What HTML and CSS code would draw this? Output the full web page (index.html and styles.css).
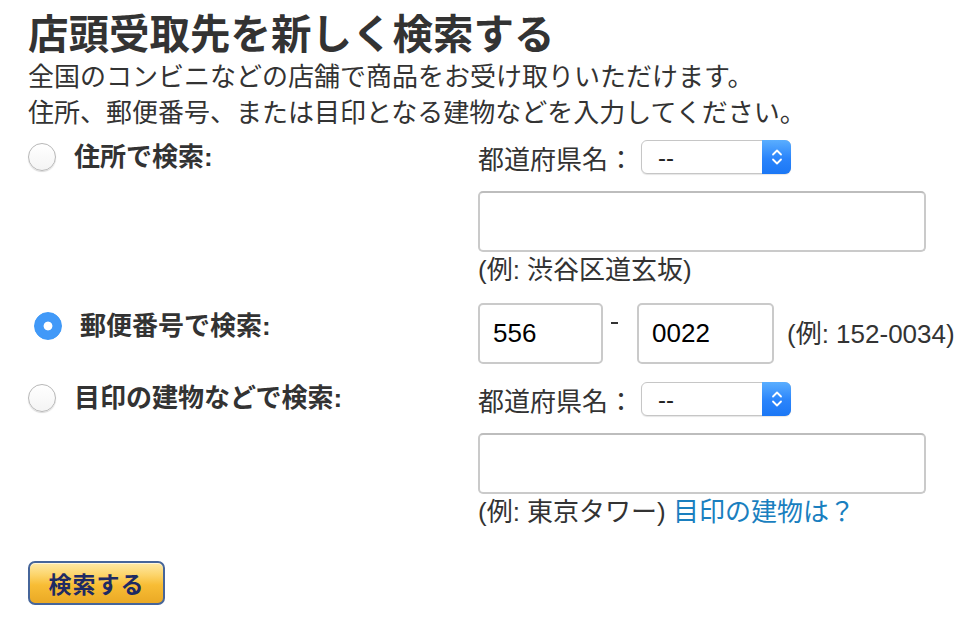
FILE: index.html
```html
<!DOCTYPE html>
<html lang="ja">
<head>
  <meta charset="UTF-8">
  <title>店頭受取先を新しく検索する</title>
  <link rel="stylesheet" href="styles.css">
</head>
<body>
  <div class="pagina">
    <h1>店頭受取先を新しく検索する</h1>
    <p class="intro">全国のコンビニなどの店舗で商品をお受け取りいただけます。<br>住所、郵便番号、または目印となる建物などを入力してください。</p>

    <form class="buscador">
      <div class="fila fila-direccion">
        <label class="opcion">
          <span class="radio"></span>
          <span>住所で検索:</span>
        </label>
        <div class="campos">
          <div class="linea">
            <span>都道府県名：</span>
            <div class="selector">
              <select><option>--</option></select>
              <span class="flechas">
                <svg width="12" height="20" viewBox="0 0 12 20"><path d="M2 7.5 6 3.5 10 7.5M2 12.5 6 16.5 10 12.5" fill="none" stroke="#fff" stroke-width="1.8" stroke-linecap="round" stroke-linejoin="round"/></svg>
              </span>
            </div>
          </div>
          <input type="text" class="texto">
          <div class="ejemplo">(例: 渋谷区道玄坂)</div>
        </div>
      </div>

      <div class="fila fila-postal">
        <label class="opcion">
          <span class="radio marcado"></span>
          <span>郵便番号で検索:</span>
        </label>
        <div class="campos">
          <div class="linea linea-postal">
            <input type="text" class="postal postal-1" value="556">
            <span class="guion"></span>
            <input type="text" class="postal postal-2" value="0022">
            <span class="ejemplo">(例: 152-0034)</span>
          </div>
        </div>
      </div>

      <div class="fila fila-edificio">
        <label class="opcion">
          <span class="radio"></span>
          <span>目印の建物などで検索:</span>
        </label>
        <div class="campos">
          <div class="linea">
            <span>都道府県名：</span>
            <div class="selector">
              <select><option>--</option></select>
              <span class="flechas">
                <svg width="12" height="20" viewBox="0 0 12 20"><path d="M2 7.5 6 3.5 10 7.5M2 12.5 6 16.5 10 12.5" fill="none" stroke="#fff" stroke-width="1.8" stroke-linecap="round" stroke-linejoin="round"/></svg>
              </span>
            </div>
          </div>
          <input type="text" class="texto">
          <div class="ejemplo">(例: 東京タワー) <a href="#">目印の建物は？</a></div>
        </div>
      </div>

      <button type="button" class="boton">検索する</button>
    </form>
  </div>
</body>
</html>
```

FILE: styles.css
```css
body {
  margin: 0;
  background: #fff;
  color: #333;
  font-family: "Liberation Sans", "Noto Sans CJK JP", sans-serif;
  font-size: 26px;
}
.pagina {
  padding: 11px 0 0 28px;
}
h1 {
  margin: 0;
  font-size: 40.5px;
  line-height: 48px;
  font-weight: bold;
}
.intro {
  margin: 0;
  line-height: 36px;
}
.buscador {
  margin-top: 9px;
}
.fila {
  display: grid;
  grid-template-columns: 450px 1fr;
  align-items: start;
}
.fila-postal {
  margin-top: 15px;
}
.fila-edificio {
  margin-top: 18px;
}
.opcion {
  display: flex;
  align-items: center;
  gap: 18px;
  font-weight: bold;
  line-height: 30px;
}
.fila-direccion .opcion {
  padding-top: 2px;
}
.fila-postal .opcion {
  padding-top: 8px;
  margin-left: 6px;
}
.fila-edificio .opcion {
  padding-top: 1px;
}
.radio {
  width: 26px;
  height: 26px;
  border: 1px solid #b8b8b8;
  border-radius: 50%;
  background: linear-gradient(#fff, #f4f4f4);
  box-shadow: 0 1px 1px rgba(0, 0, 0, 0.15);
  flex: none;
}
.radio.marcado {
  border-color: #3d98f7;
  background: radial-gradient(circle, #fff 0 4px, #4199f8 4.8px);
  box-shadow: none;
}
.campos {
  display: flex;
  flex-direction: column;
}
.linea {
  display: flex;
  align-items: center;
  gap: 7px;
  height: 34px;
}
.selector {
  position: relative;
  width: 150px;
  height: 34px;
}
.selector select {
  appearance: none;
  -webkit-appearance: none;
  width: 150px;
  height: 34px;
  margin: 0;
  padding: 0 0 0 16px;
  border: 1px solid #c6c6c6;
  border-radius: 6px;
  background: #fff;
  box-shadow: 0 1px 1px rgba(0, 0, 0, 0.1);
  font-family: "Liberation Sans", sans-serif;
  font-size: 24px;
  color: #222;
}
.flechas {
  position: absolute;
  top: 0;
  right: 0;
  width: 29px;
  height: 34px;
  border-radius: 0 6px 6px 0;
  background: linear-gradient(#5aaeff, #2a84fb 55%, #1b77f5);
  display: flex;
  align-items: center;
  justify-content: center;
}
input.texto {
  width: 448px;
  height: 61px;
  box-sizing: border-box;
  margin: 17px 0 0;
  border: 2px solid #cacaca;
  border-top-color: #bdbdbd;
  border-radius: 5px;
  font-size: 26px;
}
.ejemplo {
  line-height: 36px;
}
.ejemplo a {
  color: #1a7fbf;
  text-decoration: none;
}
.linea-postal {
  height: 61px;
  gap: 0;
}
input.postal {
  height: 61px;
  box-sizing: border-box;
  margin: 0;
  padding: 0 0 0 13px;
  border: 2px solid #cacaca;
  border-radius: 5px;
  font-family: "Liberation Sans", sans-serif;
  font-size: 26px;
  color: #000;
}
.postal-1 {
  width: 125px;
  margin-left: -1px;
}
.postal-2 {
  width: 137px;
  padding-left: 12px;
}
.guion {
  align-self: flex-start;
  width: 7px;
  height: 2px;
  margin: 19px 19px 0 8px;
  background: #333;
}
.linea-postal .ejemplo {
  margin-left: 13px;
}
.boton {
  display: block;
  margin-top: 31px;
  width: 137px;
  height: 44px;
  padding: 0;
  border: 2px solid #46659a;
  border-radius: 7px;
  background: linear-gradient(#fee9a6, #fcd46a 30%, #f8bd35 55%, #eaa925);
  box-shadow: inset 0 1px 0 rgba(255, 255, 255, 0.6);
  color: #1e2a63;
  font-family: "Noto Sans CJK JP", sans-serif;
  font-size: 23px;
  font-weight: bold;
  letter-spacing: 1px;
  cursor: pointer;
}
```
